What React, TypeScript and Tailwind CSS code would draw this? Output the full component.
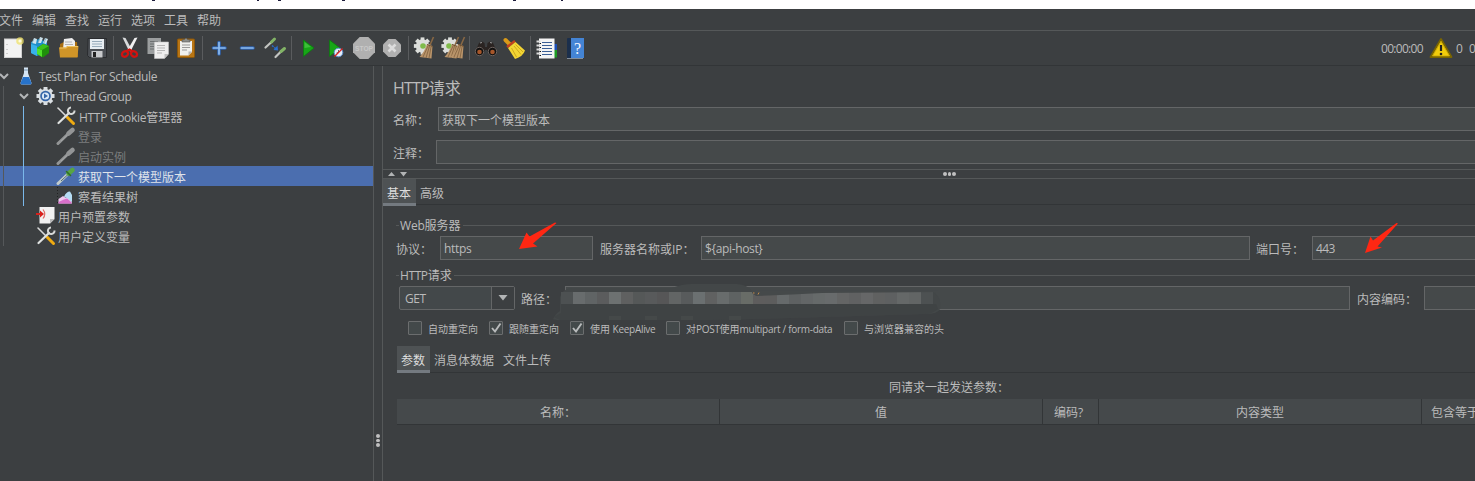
import React from "react";

type Kids = { children?: React.ReactNode };

function Ic({ children }: Kids) {
  return (
    <svg viewBox="0 0 28 28" className="h-7 w-7 shrink-0">
      {children}
    </svg>
  );
}

const Sep = () => (
  <div className="flex h-6 w-[5px] shrink-0">
    <div className="h-6 w-px bg-[#5a5c5e]" />
  </div>
);

const Gear = ({ cx, cy, r, fill }: { cx: number; cy: number; r: number; fill: string }) => (
  <g transform={`translate(${cx} ${cy})`}>
    <circle r={r * 0.78} fill={fill} />
    {[0, 45, 90, 135, 180, 225, 270, 315].map((a) => (
      <rect key={a} x={-r * 0.22} y={-r} width={r * 0.44} height={r * 0.5} fill={fill} transform={`rotate(${a})`} />
    ))}
  </g>
);

const Whisk = ({ x = 0 }: { x?: number }) => (
  <g transform={`translate(${x} 0)`}>
    <path d="M20.500 3 L17 11" stroke="#8a6844" strokeWidth="1.600" />
    <path d="M14 10 L19.500 12 L18.500 24.500 L6.500 23 Q12 17 14 10Z" fill="#b9946a" />
    <path d="M15 12 L10 23 M16.500 12 L13 24 M18 13 L16 24" stroke="#7f5f3e" strokeWidth=".8" />
    <path d="M14 10.500 L19.500 12.500" stroke="#6b4d2e" strokeWidth="1" />
  </g>
);

function Toolbar() {
  return (
    <div className="flex h-[34px] items-center pl-px">
      <Ic>
        <rect x="3.500" y="5" width="17" height="18.500" fill="#f3f3f3" stroke="#cfcfcf" />
        <path d="M6 10v1M6 15v1M6 19v1" stroke="#aaa" />
        <circle cx="19" cy="7" r="3.800" fill="#efe26a" opacity=".75" />
        <circle cx="19" cy="7" r="1.600" fill="#fffde0" />
      </Ic>
      <Ic>
        <path d="M2 8 L10 5 L18 8 L18 18 L8 22 L2 19Z" fill="#1e8fc9" />
        <path d="M2 10 L8 12 L8 22 L2 19Z" fill="#38b2ea" />
        <path d="M3 9 L5 4 L8 5 L7 10Z M9 9 L11 3 L14 4 L12 9Z M14 9 L16 4 L19 5 L17 10Z" fill="#cfe4ee" />
        <path d="M5 5 L3 9 M11 4 L9 9 M17 4 L15 9" stroke="#7da9bc" strokeWidth=".8" />
        <path d="M8 14 L14 10 L20 12 L20 19 L14 23.500 L8 20Z" fill="#1f8f0a" />
        <path d="M8 14 L13 16 L13 23 L8 20Z" fill="#4fe02a" />
        <path d="M13 16 L20 12 L14 10 L8 14Z" fill="#3cc01a" />
      </Ic>
      <Ic>
        <path d="M3 10 L7 8 L20 8 L21 23 L3 23Z" fill="#a86d10" />
        <path d="M7 5 L15 4 L18 7 L18 15 L6 15Z" fill="#eeeeee" />
        <path d="M8 8h7M8 10.500h8" stroke="#aaa" strokeWidth=".9" />
        <path d="M2 13.500 H9 L10 12 H21.500 L20.500 23.500 H3Z" fill="#d09528" />
        <path d="M2.500 14 H9.500 L10.500 12.500 H21" stroke="#f0c461" fill="none" />
      </Ic>
      <Ic>
        <path d="M3 4.500 H21.500 V23.500 H4.500 L2.500 21.500Z" fill="#4b4f54" stroke="#2a2c2f" />
        <rect x="5" y="5" width="14" height="10" fill="#e8eef2" />
        <path d="M7 7.500h10M7 10h10M7 12.500h10" stroke="#8fa4b4" strokeWidth=".9" />
        <rect x="6.500" y="17" width="11" height="6.500" fill="#c8cacc" />
        <rect x="8" y="18" width="3" height="5" fill="#222" />
      </Ic>
      <Sep />
      <Ic>
        <path d="M4.500 3.500 L7.500 4 L14 16 L11 17Z" fill="#d9dbdc" />
        <path d="M19.500 3.500 L16.500 4 L9.500 16 L12.500 17.500Z" fill="#f1f1f1" />
        <ellipse cx="7" cy="20" rx="3.200" ry="2.600" fill="none" stroke="#d3120f" strokeWidth="2.300" transform="rotate(-30 7 20)" />
        <ellipse cx="16" cy="20" rx="3.200" ry="2.600" fill="none" stroke="#d3120f" strokeWidth="2.300" transform="rotate(30 16 20)" />
        <path d="M8 17.500 L11.500 15.500 L15 17.500" stroke="#d3120f" strokeWidth="2.200" fill="none" />
      </Ic>
      <Ic>
        <path d="M1.500 4 H15 V20 H1.500Z" fill="#9b9e9f" />
        <path d="M4 7.500h8M4 10h4M4 12.500h4M4 15h4" stroke="#6d7071" />
        <path d="M8.500 8 H22.500 V20 L18.500 24.500 H8.500Z" fill="#eeeeee" stroke="#c4c4c4" strokeWidth=".6" />
        <path d="M11 11.500h8M11 14h8M11 16.500h8M11 19h5" stroke="#b5b5b5" />
        <path d="M22.500 20 H18.500 V24.500Z" fill="#bdbdbd" />
      </Ic>
      <Ic>
        <rect x="3.500" y="5" width="17" height="18.500" rx="1" fill="#b87514" stroke="#8a560b" />
        <path d="M6 7 H18 V18 L14.500 21.500 H6Z" fill="#f0f0ee" />
        <path d="M8 11h8M8 13.500h8M8 16h5" stroke="#999" />
        <path d="M8 8 V6 L10.500 5.500 Q12 2.500 13.500 5.500 L16 6 V8Z" fill="#8d8f8c" stroke="#555" strokeWidth=".6" />
        <path d="M18 17.500 H14.500 V21.500Z" fill="#b5b5b5" />
      </Ic>
      <Sep />
      <Ic>
        <path d="M12 8.500 V20 M6.500 14 H18" stroke="#2f63ae" strokeWidth="3.600" strokeLinecap="round" />
        <path d="M12 8.500 V20 M6.500 14 H18" stroke="#8fbdf0" strokeWidth="1.700" strokeLinecap="round" />
      </Ic>
      <Ic>
        <path d="M6.500 14 H18" stroke="#2f63ae" strokeWidth="3.600" strokeLinecap="round" />
        <path d="M6.500 14 H18" stroke="#8fbdf0" strokeWidth="1.700" strokeLinecap="round" />
      </Ic>
      <Ic>
        <path d="M2.500 13.500 L9 7.500" stroke="#c3c5c2" strokeWidth="2.200" strokeLinecap="round" />
        <path d="M8.500 8 L11.500 5" stroke="#82b366" strokeWidth="3" strokeLinecap="round" />
        <path d="M12.500 23 L18.500 17" stroke="#c3c5c2" strokeWidth="2.200" strokeLinecap="round" />
        <path d="M18 17.500 L21.500 14.500" stroke="#82b366" strokeWidth="3" strokeLinecap="round" />
        <path d="M9 11.500 L12.500 14.500" stroke="#2b6fd0" strokeWidth="1.500" strokeDasharray="2 1" />
        <path d="M15 16.500 L10.500 16 L14.500 11.500Z" fill="#2b6fd0" />
      </Ic>
      <Sep />
      <Ic>
        <path d="M7.500 6 L18 14 L7.500 22.500Z" fill="#17a617" stroke="#0c7a10" strokeWidth=".8" />
        <path d="M8.500 8 L15 13 L8.500 14Z" fill="#56cf50" opacity=".6" />
      </Ic>
      <Ic>
        <path d="M5.500 6 L16 14 L5.500 22.500Z" fill="#17a617" stroke="#0c7a10" strokeWidth=".8" />
        <circle cx="14.500" cy="18.500" r="4.300" fill="#e6eef8" stroke="#5b8fd0" strokeWidth="1" />
        <path d="M14.500 18.500 V16 M14.500 18.500 L12.500 19" stroke="#345" strokeWidth=".8" />
        <path d="M10.500 22.500 L18.500 14.500" stroke="#dd2222" strokeWidth="1.300" />
      </Ic>
      <Ic>
        <path d="M7.700 3 H16.300 L23 9.700 V18.300 L16.300 25 H7.700 L1 18.300 V9.700Z" fill="#b0b0b0" />
        <text x="12" y="17" textAnchor="middle" fontSize="8" fontWeight="700" fill="#c9c9c9" fontFamily="Liberation Sans" textLength="18" lengthAdjust="spacingAndGlyphs">STOP</text>
      </Ic>
      <Ic>
        <path d="M8.500 5 H15.500 L21 10.500 V17.500 L15.500 23 H8.500 L3 17.500 V10.500Z" fill="#b0b0b0" />
        <path d="M8.500 10.500 L15.500 17.500 M15.500 10.500 L8.500 17.500" stroke="#dcdcdc" strokeWidth="2.600" />
      </Ic>
      <Sep />
      <Ic>
        <Gear cx={9.5} cy={12} r={8.6} fill="#dcdedb" />
        <circle cx="10" cy="12" r="2.800" fill="#7fbb4a" />
        <Whisk />
      </Ic>
      <Ic>
        <Gear cx={9} cy={12} r={8.6} fill="#dcdedb" />
        <circle cx="8" cy="12" r="2.800" fill="#7fbb4a" />
        <Whisk x={-3} />
        <Whisk x={3} />
      </Ic>
      <Sep />
      <Ic>
        <path d="M5 9 L8 7.500 L10.500 9 L11 13 H13 L13.500 9 L16 7.500 L19 9 L22.500 17 L15 20 L13 16 H11 L9 20 L1.500 17Z" fill="#2a2422" />
        <circle cx="5.500" cy="17.500" r="4.200" fill="#111" stroke="#6d625e" />
        <circle cx="18.500" cy="17.500" r="4.200" fill="#111" stroke="#6d625e" />
        <circle cx="5.500" cy="18" r="2.300" fill="#a8572a" />
        <circle cx="18.500" cy="18" r="2.300" fill="#a8572a" />
        <path d="M6 9 L8 8.500 M16 8.500 L18 9" stroke="#999" />
      </Ic>
      <Ic>
        <path d="M3.500 6 L7.500 10" stroke="#d99a18" strokeWidth="4" strokeLinecap="round" />
        <path d="M5 13 L13 7" stroke="#c3401d" strokeWidth="2.400" />
        <path d="M6 14 L13.500 8 L23 16.500 Q21 22.500 13 25Z" fill="#f3d534" />
        <path d="M9.500 14 L14.500 23 M12 12 L19 20.500 M13.500 10.500 L21 18" stroke="#c49c14" strokeWidth=".8" />
      </Ic>
      <Sep />
      <Ic>
        <rect x="14" y="15" width="8" height="8.500" fill="#1d9a24" />
        <rect x="17" y="10" width="5" height="6" fill="#1c4fb6" />
        <rect x="4" y="4.500" width="15.500" height="20" fill="#f4f4f4" />
        <path d="M7 8.500h10M7 11.500h10M7 14.500h10M7 17.500h10M7 20.500h10" stroke="#3b5f96" strokeWidth="1.100" />
        <path d="M1.500 7.500h4M1.500 11.500h4M1.500 15.500h4M1.500 19.500h4" stroke="#dcdcdc" strokeWidth="1.800" />
        <path d="M4.500 9.500h1.500M4.500 13.500h1.500M4.500 17.500h1.500M4.500 21.500h1.500" stroke="#111" />
      </Ic>
      <Ic>
        <rect x="4" y="4" width="17" height="20.500" rx="1" fill="#1b2f4c" />
        <rect x="8" y="4" width="13" height="20" fill="#4484d4" />
        <path d="M4 24.500 H20" stroke="#9aa4b0" strokeWidth=".8" />
        <text x="14.500" y="20" textAnchor="middle" fontSize="16" fill="#f4f8ff" fontFamily="Liberation Serif">?</text>
      </Ic>
      <div className="ml-auto flex items-center pt-0.5">
        <span className="w-[48px] tracking-[-0.7px]">00:00:00</span>
        <svg viewBox="0 0 24 22" className="-mt-0.5 h-[22px] w-6">
          <path d="M12 2 L22.500 20 H1.500Z" fill="#f2cc0c" stroke="#7a6500" strokeWidth="1.800" strokeLinejoin="round" />
          <path d="M12 4.500 L20.500 19 H3.500Z" fill="none" stroke="#c6a505" strokeWidth=".8" />
          <path d="M12 8 V14" stroke="#222" strokeWidth="2.200" />
          <circle cx="12" cy="17" r="1.300" fill="#222" />
        </svg>
        <span className="ml-[3px] w-[13px]">0</span>
        <span className="w-[6px]">0</span>
      </div>
    </div>
  );
}

const Chevron = () => (
  <svg viewBox="0 0 10 10" className="h-2.5 w-2.5 shrink-0">
    <path d="M1 3 L5 7 L9 3" stroke="#b4b6b8" strokeWidth="2" fill="none" />
  </svg>
);

const Tools = () => (
  <>
    <path d="M2 2 L10 10" stroke="#d8d8d8" strokeWidth="1.600" strokeLinecap="round" />
    <path d="M11 11 L17.500 17.500" stroke="#efab12" strokeWidth="3" strokeLinecap="round" />
    <path d="M2.500 17 L13 7" stroke="#dfe1e0" strokeWidth="2.200" strokeLinecap="round" />
    <path d="M15 1.500 A3.300 3.300 0 1 0 18.500 4.500" stroke="#d7d9d8" strokeWidth="2" fill="none" />
  </>
);

const Dropper = ({ on }: { on?: boolean }) => (
  <>
    <path d="M2 17.500 L12 8" stroke={on ? "#c3cccb" : "#939596"} strokeWidth="3" strokeLinecap="round" />
    <path d="M5 15 L11.500 9" stroke={on ? "#4c6a72" : "#a3a5a6"} strokeWidth="1" />
    <path d="M12.500 7.500 L16.500 4" stroke={on ? "#57a544" : "#939596"} strokeWidth="4.600" strokeLinecap="round" />
    {on && <path d="M10.500 5.500 L14.500 9.500" stroke="#2f6e25" strokeWidth="1.600" strokeLinecap="round" />}
  </>
);

function TreeIcon({ children }: Kids) {
  return (
    <svg viewBox="0 0 20 20" className="h-5 w-5 shrink-0">
      {children}
    </svg>
  );
}

const GuideA = () => (
  <div className="h-5 w-[23px] shrink-0 pl-[3px]">
    <div className="h-5 w-px bg-[#55585a]" />
  </div>
);
const GuideB = () => <div className="mr-8 h-5 w-px shrink-0 bg-[#7ab8ea]" />;

function Tree() {
  return (
    <div className="flex w-[373px] shrink-0 flex-col">
      <div className="flex h-5 items-center">
        <div className="-ml-px flex w-[17px]"><Chevron /></div>
        <TreeIcon>
          <path d="M8 1.500 H12 V7 L15.500 17 Q15.500 18.500 14 18.500 H6 Q4.500 18.500 4.500 17 L8 7Z" fill="#d5e5f4" />
          <path d="M7 11 H13 L15.500 17 Q15.500 18.500 14 18.500 H6 Q4.500 18.500 4.500 17Z" fill="#2773cb" />
          <path d="M8 4h4" stroke="#7794ad" />
        </TreeIcon>
        <span className="pl-[3px] pt-0.5 tracking-[-0.37px]">Test Plan For Schedule</span>
      </div>
      <div className="flex h-5 items-center">
        <div className="h-5 w-[19px] shrink-0 pl-[3px]"><div className="h-5 w-px bg-[#55585a]" /></div>
        <Chevron />
        <div className="w-[7px]" />
        <TreeIcon>
          <Gear cx={9.5} cy={10} r={9} fill="#dadfe3" />
          <circle cx="9.500" cy="10" r="5.300" fill="#3566a8" />
          <circle cx="9.500" cy="10" r="3.600" fill="#dbe8f6" />
          <path d="M8 7.500 L12 10 L8 12.500Z" fill="#3566a8" />
        </TreeIcon>
        <span className="pl-[3px] pt-0.5 tracking-[-0.5px]">Thread Group</span>
      </div>
      <div className="flex h-5 items-center">
        <GuideA /><GuideB />
        <TreeIcon><Tools /></TreeIcon>
        <span className="pl-[3px] pt-[3px]"><span className="tracking-[-0.3px]">HTTP Cookie</span>管理器</span>
      </div>
      <div className="flex h-5 items-center text-[#7b7d7e]">
        <GuideA /><GuideB />
        <TreeIcon><Dropper /></TreeIcon>
        <span className="pl-[2px] pt-1">登录</span>
      </div>
      <div className="flex h-5 items-center text-[#7b7d7e]">
        <GuideA /><GuideB />
        <TreeIcon><Dropper /></TreeIcon>
        <span className="pl-[2px] pt-1">启动实例</span>
      </div>
      <div className="flex h-5 items-center bg-[#4b6eaf] text-[#dfe3ea]">
        <GuideA /><GuideB />
        <TreeIcon><Dropper on /></TreeIcon>
        <span className="pl-[2px] pt-1">获取下一个模型版本</span>
      </div>
      <div className="flex h-5 items-center">
        <GuideA /><GuideB />
        <TreeIcon>
          <path d="M1.500 1 V17" stroke="#222" strokeDasharray="1 2" />
          <path d="M2.500 17.500 V13 L7 10 L10 12 L14 8 L16 17.500Z" fill="#f0c8f0" />
          <path d="M8 11 Q10 5.500 14 5.500 L16 9 V16 L11 12Z" fill="#b6dcf5" />
          <path d="M2.500 17.500 V16 L8 13.500 L11 12.500 L14 15 L16 17.500Z" fill="#d86fca" />
        </TreeIcon>
        <span className="pl-[2px] pt-1">察看结果树</span>
      </div>
      <div className="flex h-5 items-center">
        <GuideA />
        <div className="w-[13px] shrink-0" />
        <TreeIcon>
          <path d="M3.500 1 H18.500 V13 L14 17.500 H3.500Z" fill="#f1f1f1" />
          <path d="M18.500 13 H14 V17.500Z" fill="#b9b9b9" />
          <path d="M0 8 H5" stroke="#d8201c" strokeWidth="2" />
          <path d="M4 4.500 L8 8 L4 11.500Z" fill="#d8201c" />
          <path d="M7 3.500 Q10.500 8 7 12.500" stroke="#e06a66" strokeWidth="1.200" fill="none" />
        </TreeIcon>
        <span className="pl-[2px] pt-1">用户预置参数</span>
      </div>
      <div className="flex h-5 items-center">
        <GuideA />
        <div className="w-[13px] shrink-0" />
        <TreeIcon><Tools /></TreeIcon>
        <span className="pl-[2px] pt-1">用户定义变量</span>
      </div>
    </div>
  );
}

const FIELD = "flex h-6 shrink-0 items-center border border-[#646667] bg-[#45494a] pl-[3px] pt-0.5";

function GroupTitle({ children }: Kids) {
  return (
    <div className="flex h-4 items-center">
      <div className="h-px w-[3px] bg-[#555859]" />
      <div className="pl-px pr-0.5 pt-0.5 leading-4">{children}</div>
      <div className="h-px flex-1 bg-[#555859]" />
    </div>
  );
}

function Check({ on, w, children }: { on?: boolean; w: string; children: React.ReactNode }) {
  return (
    <div className={`flex shrink-0 items-center ${w}`}>
      <div className="flex h-3.5 w-3.5 shrink-0 items-center justify-center rounded-[1px] border border-[#6b6d6e] bg-[#43494a]">
        {on && (
          <svg viewBox="0 0 12 12" className="h-3 w-3 shrink-0">
            <path d="M2 6 L5 9.500 L10.500 1.500" stroke="#b9bbbc" strokeWidth="1.900" fill="none" />
          </svg>
        )}
      </div>
      <span className="pl-[6px] pt-px">{children}</span>
    </div>
  );
}

const TILES = ["#4d5152", "#686c6d", "#606465", "#5b5c5d", "#6d7171", "#5f6060", "#555858", "#585a5b", "#565657", "#626565", "#585b5c", "#6b7071", "#606161", "#686c6c", "#5e6262", "#686c67", "#5e5d5d", "#5d5d5d", "#666a6b", "#5e6162", "#636667", "#666a6a", "#686b6c", "#646565", "#606162", "#666768", "#606161", "#5e6061", "#656868", "#626565", "#4d5152"];

function Mosaic() {
  return (
    <svg viewBox="0 0 392 40" className="absolute -top-1 -left-[14px] h-10 w-[392px]">
      <path d="M1 36 Q4 30 8 28 L8 14 Q10 6 20 5 L120 5 Q130 1 140 1 L185 1 Q196 2 200 8 L380 9 Q390 12 388 26 Q386 31 374 31 L240 35 L160 37 L8 37 Q2 37 1 36Z" fill="#434748" />
      <path d="M9 21 H384 L386 26 Q380 31 372 31 L240 35 L160 37 H8 L2 34 L9 30Z" fill="#3f4344" />
      {TILES.map((c, i) => (
        <rect key={i} x={9 + i * 12} y="9" width="12" height="12" fill={c} />
      ))}
      {[4, 7, 10, 14].map((i) => (
        <rect key={i} x={9 + i * 12} y="33" width="12" height="4" fill="#454949" />
      ))}
      <path d="M200 7.500 L386 7.500 L386 9 L270 10 L240 11.500 L204 13 L200 10Z" fill="#45494a" />
      <path d="M201 10h1.500M207 9.500l-1 2" stroke="#c48a48" />
    </svg>
  );
}

export default function App() {
  return (
    <div className="flex h-[481px] w-[1475px] flex-col overflow-hidden whitespace-nowrap bg-[#3c3f41] font-['Open_Sans','Noto_Sans_CJK_SC',sans-serif] text-[12px] leading-5 text-[#bbbbbb]">
      <div className="h-[9px] shrink-0 bg-white">
        <svg viewBox="0 0 600 9" className="h-[9px] w-[600px]">
          <path d="M152 0h3M257 0h2M278 0h3M342 0h3M513 0h3M561 0h2" stroke="#1b1b3a" strokeWidth="2" />
        </svg>
      </div>
      <div className="-ml-px flex h-[21px] shrink-0 items-center gap-[9px] pt-0.5">
        {["文件", "编辑", "查找", "运行", "选项", "工具", "帮助"].map((m) => (
          <span key={m}>{m}</span>
        ))}
      </div>
      <div className="h-px shrink-0 bg-[#555859]" />
      <Toolbar />
      <div className="h-px shrink-0 bg-[#323537]" />
      <div className="flex min-h-0 flex-1">
        <Tree />
        <div className="flex w-2.5 shrink-0 flex-col items-center gap-px border-x border-[#555859] pt-[368px]">
          <div className="h-[3.5px] w-[3.5px] rounded-full bg-[#c0c0c0]" />
          <div className="h-[3.5px] w-[3.5px] rounded-full bg-[#c0c0c0]" />
          <div className="h-[3.5px] w-[3.5px] rounded-full bg-[#c0c0c0]" />
        </div>
        <div className="flex min-w-0 flex-1 flex-col overflow-hidden">
          <div className="flex h-[41px] items-center pl-2.5 pt-0.5 text-[16px]">
            <span className="tracking-[-0.8px]">HTTP</span>请求
          </div>
          <div className="flex h-6 shrink-0 items-center pl-2.5">
            <span className="w-[45px] shrink-0 pt-1">名称：</span>
            <div className={`${FIELD} w-[1050px]`}><span className="pt-0.5">获取下一个模型版本</span></div>
          </div>
          <div className="mt-[9px] flex h-6 shrink-0 items-center pl-2.5">
            <span className="w-[43px] shrink-0 pt-1">注释：</span>
            <div className={`${FIELD} w-[1050px]`} />
          </div>
          <div className="mt-[5px] flex h-2.5 shrink-0 items-center border-y border-[#555859] pl-[5px]">
            <svg viewBox="0 0 20 8" className="h-2 w-5">
              <path d="M0 6 L3.500 2 L7 6Z M12 2 H19 L15.500 6.500Z" fill="#b2b4b5" />
            </svg>
            <div className="ml-[535px] flex gap-px">
              <div className="h-[3.5px] w-[3.5px] rounded-full bg-[#c0c0c0]" />
              <div className="h-[3.5px] w-[3.5px] rounded-full bg-[#c0c0c0]" />
              <div className="h-[3.5px] w-[3.5px] rounded-full bg-[#c0c0c0]" />
            </div>
          </div>
          <div className="flex h-[27px] shrink-0">
            <div className="h-[27px] w-[33px] border-b-[3px] border-[#747a80] bg-[#4e5254] pl-1 pt-[6px] leading-[18px] text-[#dddddd]">基本</div>
            <div className="h-[27px] flex-1 pb-px">
              <div className="h-[26px] border-b border-[#323537] pl-1 pt-[6px] leading-[18px]">高级</div>
            </div>
          </div>
          <div className="mt-[11px] flex shrink-0 flex-col pl-[13px]">
            <GroupTitle><span className="tracking-[-0.2px]">Web</span>服务器</GroupTitle>
            <div className="mt-[3px] flex h-6 items-center">
              <span className="w-11 shrink-0 pt-1">协议：</span>
              <div className={`${FIELD} relative w-[153px] tracking-[-0.3px]`}>
                https
                <svg viewBox="0 0 40 32" className="absolute -top-[16px] left-[77px] h-8 w-10">
                  <path d="M1 28 L8.500 11.500 L11.500 15.500 L37 1.500 L38.500 2 L15 22.500 L19.500 25.500Z" fill="#ff2713" />
                </svg>
              </div>
              <span className="w-[108px] shrink-0 pl-[7px] pt-1">服务器名称或IP：</span>
              <div className={`${FIELD} w-[549px] tracking-[-0.35px]`}>{"${api-host}"}</div>
              <span className="w-[62px] shrink-0 pl-[6px] pt-1">端口号：</span>
              <div className={`${FIELD} relative w-[200px] tracking-[-0.6px]`}>
                443
                <svg viewBox="0 0 36 32" className="absolute -top-[15px] left-[51px] h-8 w-9">
                  <path d="M1 31 L6.500 14.500 L9 18.500 L32.500 1 L34 1.500 L13.500 24.500 L18 25.500Z" fill="#ff2713" />
                </svg>
              </div>
            </div>
            <div className="mt-[7px]">
              <GroupTitle><span className="tracking-[-0.4px]">HTTP</span>请求</GroupTitle>
            </div>
            <div className="mt-[3px] flex h-6 items-center pl-[3px]">
              <div className="flex h-6 w-[116px] shrink-0 rounded-[2px] border border-[#646667] bg-[#43484a]">
                <div className="flex w-[92px] items-center border-r border-[#646667] pl-[5px] pt-0.5 tracking-[-0.4px]">GET</div>
                <div className="flex flex-1 items-center justify-center bg-[#3c3f41]">
                  <svg viewBox="0 0 10 6" className="h-1.5 w-2.5"><path d="M0.500 0 H9.500 L5 5.500Z" fill="#b2b4b5" /></svg>
                </div>
              </div>
              <span className="w-[50px] shrink-0 pl-[6px] pt-1">路径：</span>
              <div className={`${FIELD} relative w-[785px]`}>
                <Mosaic />
              </div>
              <span className="w-[74px] shrink-0 pl-[7px] pt-1">内容编码：</span>
              <div className={`${FIELD} w-[100px]`} />
            </div>
            <div className="mt-[11px] flex h-3.5 items-center pl-3 text-[10px] leading-[14px]">
              <Check w="w-[81px]">自动重定向</Check>
              <Check on w="w-[81px]">跟随重定向</Check>
              <Check on w="w-[96px]">使用 <span className="tracking-[-0.3px]">KeepAlive</span></Check>
              <Check w="w-[178px]">对<span className="tracking-[-0.3px]">POST</span>使用<span className="tracking-[-0.3px]">multipart / form-data</span></Check>
              <Check w="w-[120px]">与浏览器兼容的头</Check>
            </div>
            <div className="mt-[11px] flex h-[27px] shrink-0 pl-px">
              <div className="h-[27px] w-[33px] border-b-[3px] border-[#747a80] bg-[#4e5254] pl-1 pt-[6px] leading-[18px] text-[#dddddd]">参数</div>
              <div className="h-[27px] flex-1">
                <div className="flex h-[27px] gap-[9px] border-b border-[#323537] pl-1 pt-[6px] leading-[18px]">
                  <span>消息体数据</span>
                  <span>文件上传</span>
                </div>
              </div>
            </div>
            <div className="flex h-[26px] items-center pl-[493px] pt-1">同请求一起发送参数：</div>
            <div className="ml-px flex h-[26px] w-[1200px] border-b border-[#323537] bg-[#45494b] text-center leading-[26px]">
              <div className="w-[323px] border-r border-[#323537] pt-px">名称：</div>
              <div className="w-[323px] border-r border-[#323537] pt-px">值</div>
              <div className="w-[56px] border-r border-[#323537] pr-1 pt-px">编码?</div>
              <div className="w-[323px] border-r border-[#323537] pt-px">内容类型</div>
              <div className="w-[80px] pl-[9px] pt-px text-left">包含等于？</div>
            </div>
          </div>
        </div>
      </div>
    </div>
  );
}
